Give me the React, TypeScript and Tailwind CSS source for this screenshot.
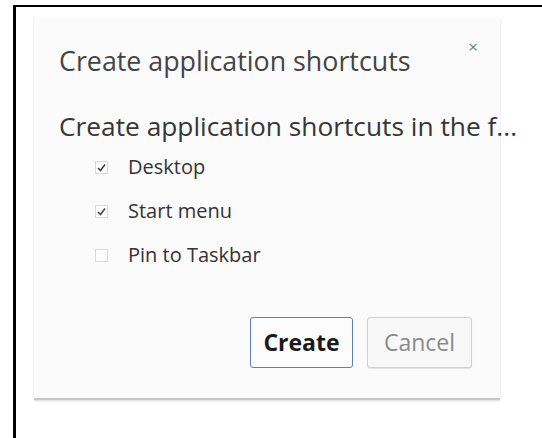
import React from "react";

function Box({ checked }: { checked: boolean }) {
  return (
    <svg width="13" height="13" viewBox="0 0 13 13" className="shrink-0">
      <rect x="0.5" y="0.5" width="12" height="12" fill="#fdfdfd" stroke="#dadada" />
      {checked && (
        <path d="M3 7 L5.5 9.5 L10 3.5" fill="none" stroke="#444" strokeWidth="1.6" />
      )}
    </svg>
  );
}

function Row({ label, checked }: { label: string; checked: boolean }) {
  return (
    <div className="flex items-center gap-[20px] h-[44px]">
      <Box checked={checked} />
      <span className="text-[20px] leading-[30px] text-[#333]">{label}</span>
    </div>
  );
}

export default function App() {
  return (
    <div
      className="w-[542px] h-[438px] bg-white overflow-hidden"
      style={{ fontFamily: '"Open Sans", "Noto Sans", sans-serif' }}
    >
      <div className="ml-[13px] mt-[5px] h-[433px] border-l-[3px] border-t-[2px] border-black pl-[18px] pt-[10px]">
        <div className="w-[466px] h-[383px] bg-[#fbfbfb] border-b-[2px] border-[#c8c8c8] shadow-[0_1px_2px_rgba(0,0,0,0.15)] relative pl-[25px] pt-[26px]">
          <button className="absolute right-[22px] top-[21px] text-[17px] leading-none text-[#7a7a7a]">×</button>
          <div className="text-[26.8px] leading-[36px] text-[#444] whitespace-nowrap">
            Create application shortcuts
          </div>
          <div className="mt-[31px] text-[26.3px] leading-[32px] text-[#363636] whitespace-nowrap">
            Create application shortcuts in the f...
          </div>
          <div className="mt-[3px] pl-[36px] flex flex-col">
            <Row label="Desktop" checked />
            <Row label="Start menu" checked />
            <Row label="Pin to Taskbar" checked={false} />
          </div>
          <div className="mt-[40px] flex justify-end gap-[14px] pr-[28px]">
            <button className="w-[103px] h-[51px] rounded-[3px] border border-[#5d7fb5] bg-[#fcfcfc] text-[23px] font-bold text-[#1a1a1a]">
              Create
            </button>
            <button className="w-[105px] h-[51px] rounded-[3px] border border-[#d0d0d0] bg-[#f8f8f8] text-[23px] text-[#8a8a8a] shadow-[0_1px_1px_rgba(0,0,0,0.1)]">
              Cancel
            </button>
          </div>
        </div>
      </div>
    </div>
  );
}
